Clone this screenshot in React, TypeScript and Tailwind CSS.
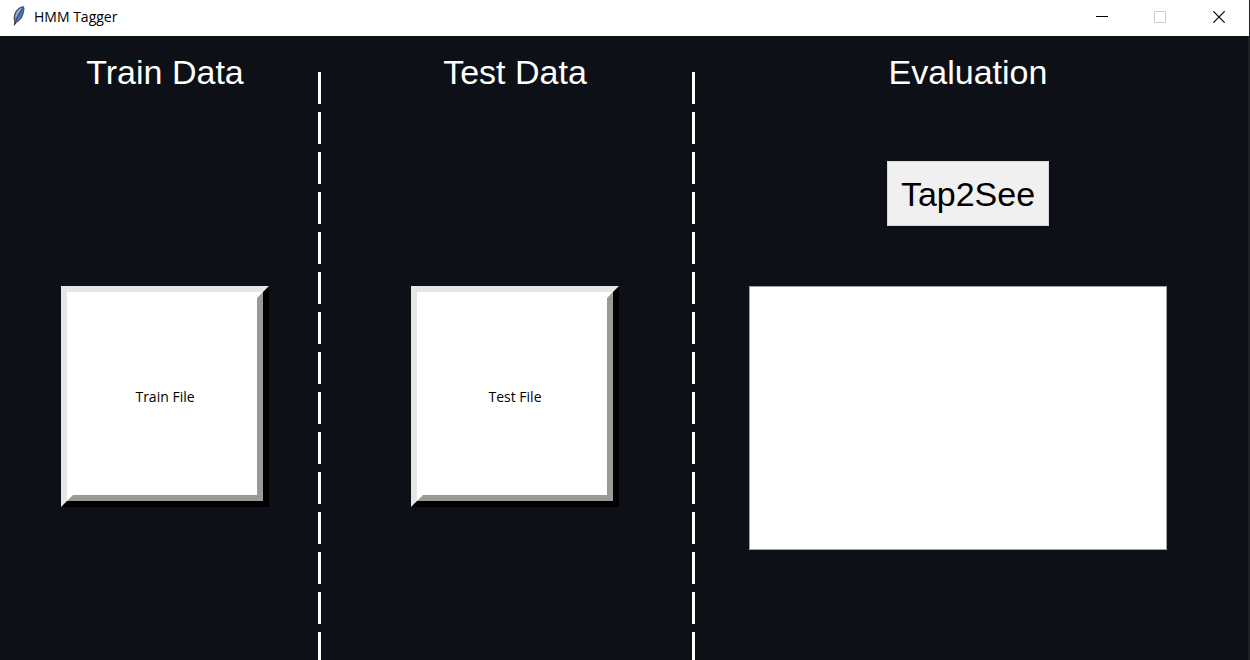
import type { ReactNode } from 'react';

const dashes = Array.from({ length: 15 }, (_, i) => i);

function Divider() {
  return (
    <div aria-hidden="true" className="flex w-1 shrink-0 flex-col gap-2 overflow-hidden pt-9">
      {dashes.map((i) => (
        <span key={i} className="h-8 w-[3px] shrink-0 bg-white" />
      ))}
    </div>
  );
}

function Heading({ children }: { children: ReactNode }) {
  return <h2 className="text-[34px] leading-10 text-white">{children}</h2>;
}

function FileButton({ children }: { children: ReactNode }) {
  return (
    <button
      type="button"
      className="mt-[194px] border-6 border-t-[#e6e6e6] border-r-black border-b-black border-l-[#e6e6e6] bg-white"
    >
      <span className="flex h-[209px] w-[196px] items-center justify-center border-6 border-t-white border-r-[#999999] border-b-[#999999] border-l-white font-['Open_Sans','Noto_Sans',sans-serif] text-sm text-black">
        {children}
      </span>
    </button>
  );
}

function FeatherIcon() {
  return (
    <svg viewBox="0 0 14 20" className="h-5 w-3.5" aria-hidden="true">
      <path d="M11.500 .8C8 .8 4.500 3.500 3 7.500C1.900 10.500 1.900 13.500 2.800 15.500L2.300 19.300L4.200 16.300C7.500 15 9.800 12 10.800 8.500C11.700 5.500 12.400 3 11.500 .8Z" fill="#4a7ab8" stroke="#3a3c42" strokeWidth="1" />
      <path d="M10 1.700C7 2.700 4.600 5.500 3.700 9L3.300 13C5 9.500 7.500 5 10 1.700Z" fill="#a9b4c2" />
      <path d="M10.500 2.500C8 6.500 5.500 10.500 3.300 16.500" fill="none" stroke="#26364f" strokeWidth=".8" />
    </svg>
  );
}

export default function App() {
  return (
    <div className="flex h-screen flex-col overflow-hidden bg-[#0d1117] font-['Liberation_Sans',Arial,sans-serif]">
      <header className="flex h-9 shrink-0 items-center border-r border-[#202020] bg-white pl-3 text-black">
        <span className="pb-1">
          <FeatherIcon />
        </span>
        <h1 className="ml-2 flex-1 pb-0.5 font-['Open_Sans','Noto_Sans',sans-serif] text-sm">HMM Tagger</h1>
        <button type="button" aria-label="Minimize" className="flex h-9 w-[58px] items-center justify-center pb-1">
          <svg viewBox="0 0 12 12" className="size-3" shapeRendering="crispEdges">
            <path d="M0 6.500H12" stroke="#000" />
          </svg>
        </button>
        <button type="button" aria-label="Maximize" disabled className="flex h-9 w-[58px] items-center justify-center pb-0.5">
          <svg viewBox="0 0 12 12" className="size-3">
            <path d="M.5 .5H11.500V11.500H.5Z" fill="none" stroke="#cccccc" />
          </svg>
        </button>
        <button type="button" aria-label="Close" className="flex h-9 w-[60px] items-center justify-center pb-0.5">
          <svg viewBox="0 0 12 12" className="size-3">
            <path d="M.3 .3L11.700 11.700M11.700 .3L.3 11.700" stroke="#000" strokeWidth="1.200" />
          </svg>
        </button>
      </header>
      <main className="flex min-h-0 flex-1 border-r-2 border-[#1e2124]">
        <section className="flex flex-[306] flex-col items-center pt-4 pl-3">
          <Heading>Train Data</Heading>
          <FileButton>Train File</FileButton>
        </section>
        <Divider />
        <section className="flex flex-[354] flex-col items-center pt-4 pl-4">
          <Heading>Test Data</Heading>
          <FileButton>Test File</FileButton>
        </section>
        <Divider />
        <section className="flex flex-[524] flex-col items-center pt-4 pr-7">
          <div className="flex flex-col items-center pl-5">
            <Heading>Evaluation</Heading>
            <button
              type="button"
              className="mt-[69px] h-[65px] w-[162px] border border-[#d8d8d8] bg-[#f0f0f0] text-[34px] leading-10 text-black"
            >
              Tap2See
            </button>
          </div>
          <textarea
            aria-label="Evaluation results"
            className="mt-[60px] h-[264px] w-[418px] resize-none border border-[#a0a0a0] bg-white p-1 text-sm text-black outline-none"
          />
        </section>
      </main>
    </div>
  );
}
